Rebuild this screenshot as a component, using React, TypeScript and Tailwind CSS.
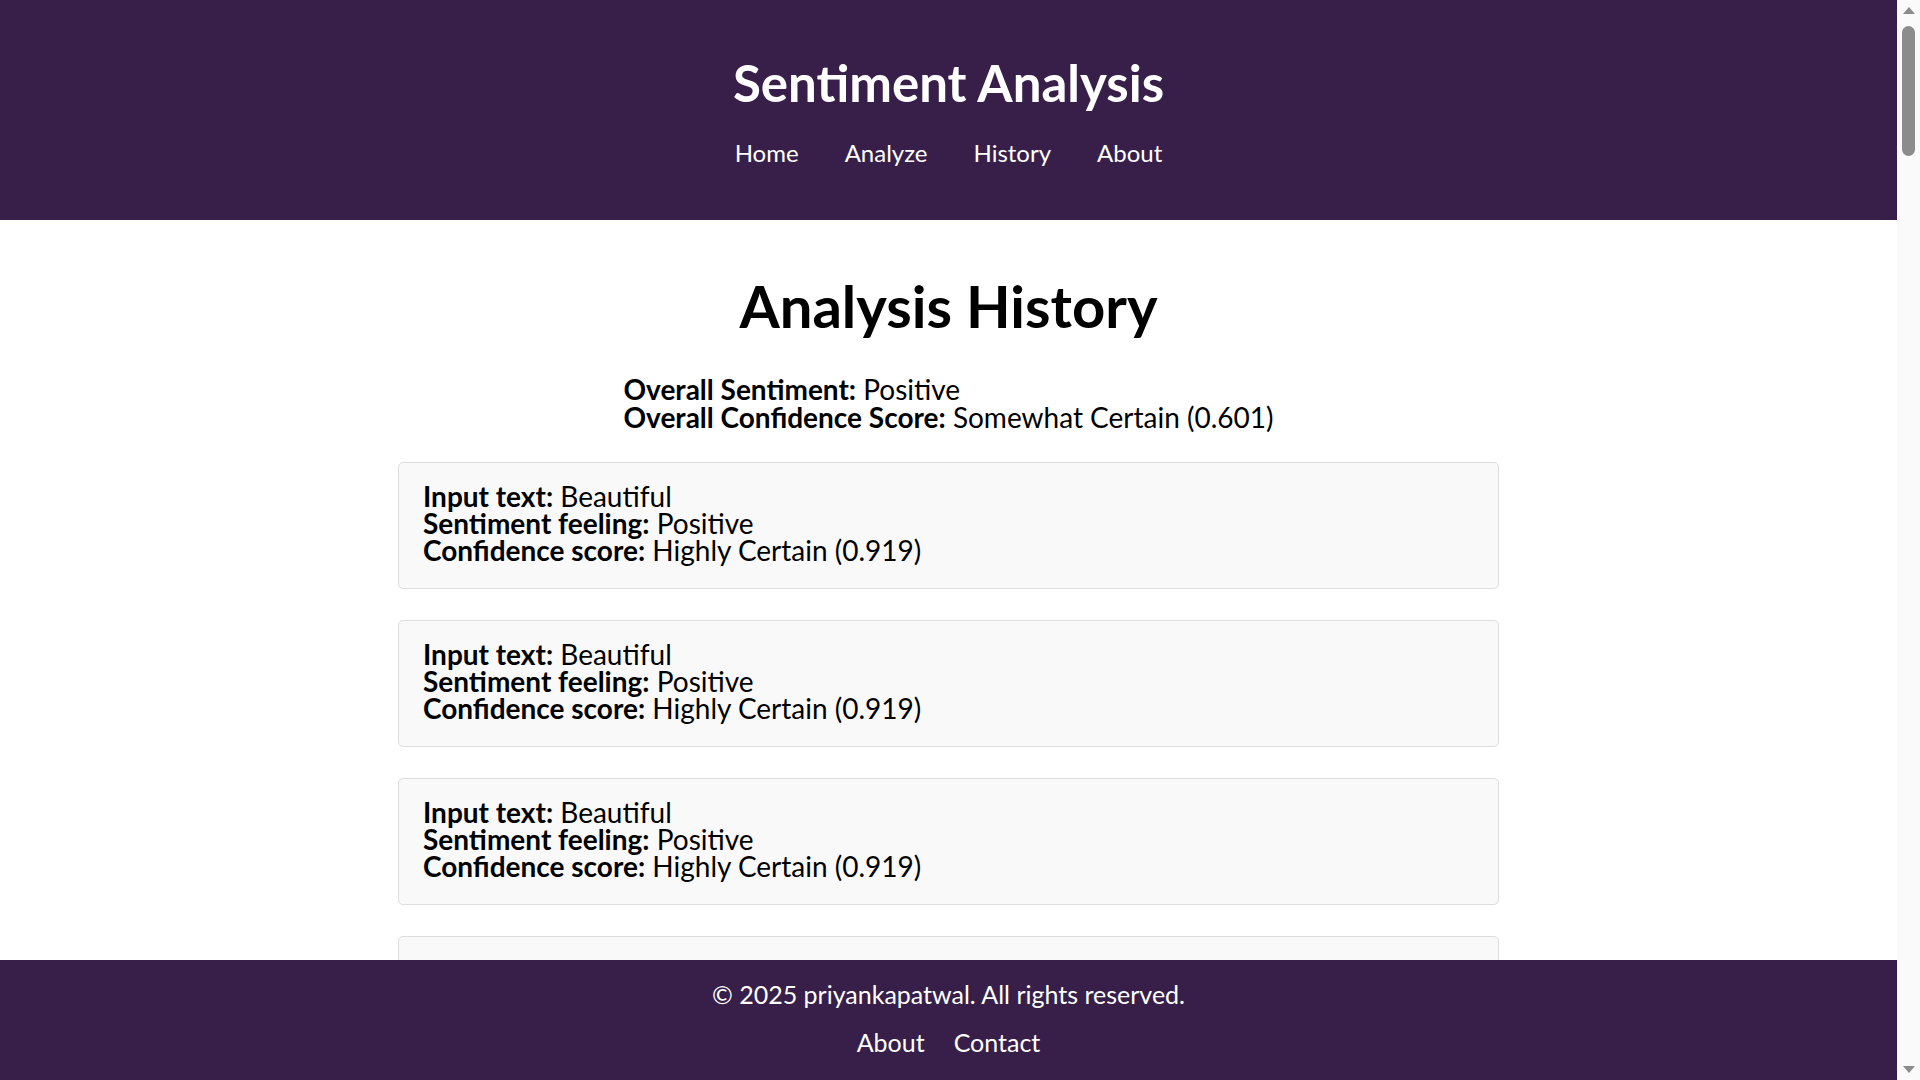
import React from 'react';

interface HistoryItem {
    text: string;
    feeling: string;
    label: string;
    score: number;
}

const history: HistoryItem[] = Array.from({ length: 8 }, () => ({
    text: 'Beautiful',
    feeling: 'Positive',
    label: 'Highly Certain',
    score: 0.919,
}));

const font = { fontFamily: 'Lato, "Noto Sans", sans-serif' };

// static look-alike of the browser scrollbar seen in the screenshot
const ScrollStrip: React.FC = () => (
    <div className="w-[23px] shrink-0 h-full bg-[#fafafa] flex flex-col items-center">
        <svg width="12" height="8" viewBox="0 0 12 8" className="mt-[7px]">
            <path d="M6 0 L12 7 L0 7 Z" fill="#8c8c8c" />
        </svg>
        <div className="mt-[11px] w-[13px] h-[130px] rounded-full bg-[#8c8c8c]" />
        <div className="flex-1" />
        <svg width="12" height="8" viewBox="0 0 12 8" className="mb-[6px]">
            <path d="M0 0 L12 0 L6 7 Z" fill="#8c8c8c" />
        </svg>
    </div>
);

const App: React.FC = () => {
    return (
        <div className="h-screen flex bg-white text-black overflow-hidden" style={font}>
            <div className="flex-1 flex flex-col min-w-0">
                <div className="flex-1 overflow-hidden">
                    <header className="h-[220px] bg-[#371f4a] pt-[55px] text-white text-center">
                        <h1 className="text-[51px] leading-[56px] font-bold">Sentiment Analysis</h1>
                        <nav className="mt-[27px] flex justify-center gap-[46px] text-[24px] leading-[30px]">
                            <a href="#">Home</a>
                            <a href="#">Analyze</a>
                            <a href="#">History</a>
                            <a href="#">About</a>
                        </nav>
                    </header>

                    <main className="pt-[58px] pb-[160px]">
                        <h2 className="text-center text-[58px] leading-[56px] font-bold">Analysis History</h2>

                        <div className="mt-[41px] flex justify-center">
                            <div className="text-[28px] leading-[28px]">
                                <p><span className="font-bold">Overall Sentiment:</span> Positive</p>
                                <p><span className="font-bold">Overall Confidence Score:</span> Somewhat Certain (0.601)</p>
                            </div>
                        </div>

                        <div className="mt-[31px] w-[1101px] mx-auto flex flex-col gap-[31px]">
                            {history.map((item, i) => (
                                <div key={i} className="bg-[#f9f9f9] border border-[#dddddd] rounded-[5px] px-6 pt-5 pb-6 text-[28px] leading-[27px]">
                                    <p><span className="font-bold">Input text:</span> {item.text}</p>
                                    <p><span className="font-bold">Sentiment feeling:</span> {item.feeling}</p>
                                    <p><span className="font-bold">Confidence score:</span> {item.label} ({item.score.toFixed(3)})</p>
                                </div>
                            ))}
                        </div>
                    </main>
                </div>

                <footer className="h-[120px] shrink-0 bg-[#371f4a] text-white text-center pt-5">
                    <p className="text-[25px] leading-[28px]">© 2025 priyankapatwal. All rights reserved.</p>
                    <div className="mt-5 flex justify-center gap-[29px] text-[25px] leading-[28px]">
                        <a href="#">About</a>
                        <a href="#">Contact</a>
                    </div>
                </footer>
            </div>
            <ScrollStrip />
        </div>
    );
};

export default App;
